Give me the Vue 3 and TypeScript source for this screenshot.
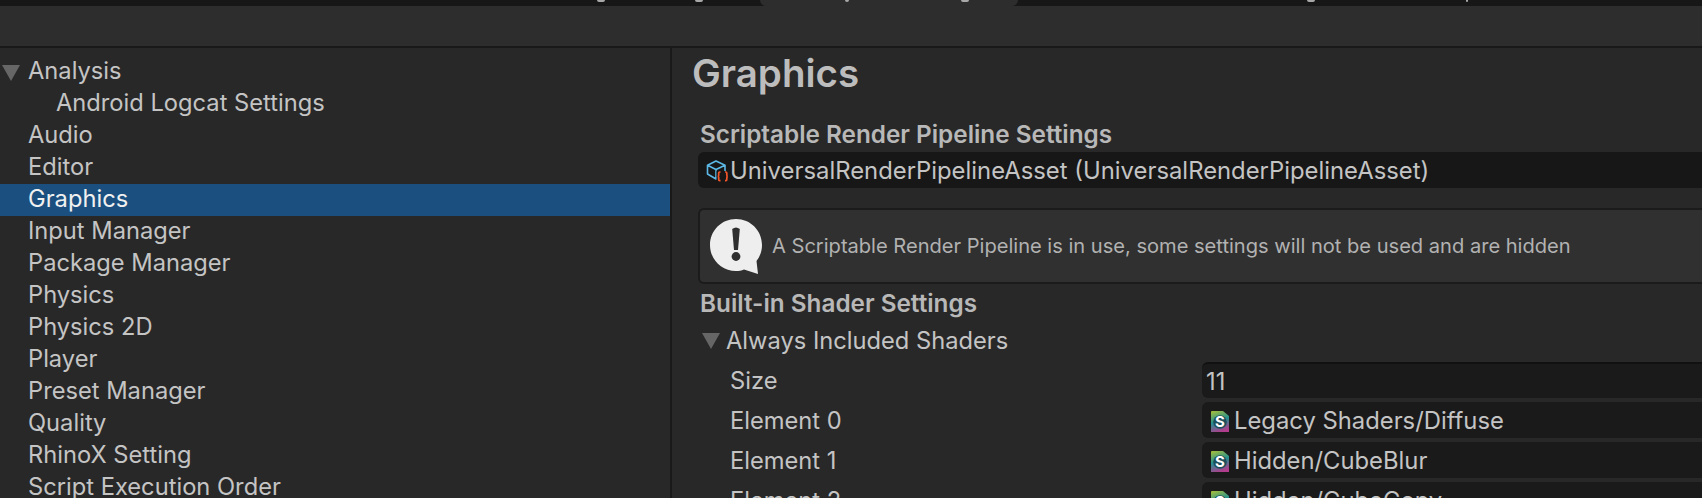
<script setup lang="ts">
const categories = [
  { name: 'Analysis', expanded: true },
  { name: 'Android Logcat Settings', child: true },
  { name: 'Audio' },
  { name: 'Editor' },
  { name: 'Graphics', selected: true },
  { name: 'Input Manager' },
  { name: 'Package Manager' },
  { name: 'Physics' },
  { name: 'Physics 2D' },
  { name: 'Player' },
  { name: 'Preset Manager' },
  { name: 'Quality' },
  { name: 'RhinoX Setting' },
  { name: 'Script Execution Order' },
]

const shaders = [
  { label: 'Element 0', value: 'Legacy Shaders/Diffuse' },
  { label: 'Element 1', value: 'Hidden/CubeBlur' },
  { label: 'Element 2', value: 'Hidden/CubeCopy' },
]

// bottoms of the tab titles that stick out under the window's top edge
const tabMarks = [
  { x: 597, w: 8 },
  { x: 695, w: 8 },
  { x: 845, w: 4 },
  { x: 961, w: 8 },
  { x: 1307, w: 8 },
  { x: 1466, w: 2 },
]
</script>

<template>
  <div class="window">
    <div class="tabstrip">
      <div class="tab-active"></div>
      <span
        v-for="mark in tabMarks"
        :key="mark.x"
        class="tab-mark"
        :style="{ left: mark.x + 'px', width: mark.w + 'px' }"
      ></span>
    </div>
    <div class="toolbar"></div>
    <div class="content">
      <aside class="sidebar">
        <div
          v-for="item in categories"
          :key="item.name"
          class="tree-row"
          :class="{ selected: item.selected, child: item.child }"
        >
          <span v-if="item.expanded" class="arrow tree-arrow"></span>
          {{ item.name }}
        </div>
      </aside>
      <main class="inspector">
        <h1 class="title">Graphics</h1>
        <h2 class="section first">Scriptable Render Pipeline Settings</h2>
        <div class="field object-field asset-field">
          <svg class="asset-icon" width="24" height="24" viewBox="0 0 24 24" fill="none">
            <path d="M10 2 L19 6.2 V15 L10 20 L1.5 15 V6.2 Z M1.5 6.2 L10 10.5 L19 6.2 M10 10.5 V20" stroke="#5cb8e6" stroke-width="1.6" stroke-linejoin="round" />
            <rect x="10.5" y="12" width="13.5" height="12" fill="#171717" />
            <path d="M14.5 13 h-.8 q-1 0 -1 1 v2.2 q0 1 -1 1.1 q1 .1 1 1.1 v2.2 q0 1 1 1 h.8" stroke="#f4552a" stroke-width="1.7" />
            <path d="M19 13 h.8 q1 0 1 1 v2.2 q0 1 1 1.1 q-1 .1 -1 1.1 v2.2 q0 1 -1 1 h-.8" stroke="#f4552a" stroke-width="1.7" />
          </svg>
          <span>UniversalRenderPipelineAsset (UniversalRenderPipelineAsset)</span>
        </div>
        <div class="helpbox">
          <svg class="help-icon" width="54" height="58" viewBox="0 0 54 58">
            <path d="M26 1 C40.5 1 52 12.5 52 27 C52 33 50 38.5 46.5 43 L48 56 L34 51.5 C31.5 52.5 29 53 26 53 C11.5 53 0 41.5 0 27 C0 12.5 11.5 1 26 1 Z" fill="#eeeeee" />
            <path d="M22.2 11 Q26 8 29.8 11 L28 32 H24 Z" fill="#2f2f2f" />
            <circle cx="26" cy="38.5" r="4.4" fill="#2f2f2f" />
          </svg>
          <span>A Scriptable Render Pipeline is in use, some settings will not be used and are hidden</span>
        </div>
        <h2 class="section">Built-in Shader Settings</h2>
        <div class="foldout"><span class="arrow"></span>Always Included Shaders</div>
        <div class="prop-row">
          <label>Size</label>
          <div class="field size-field">11</div>
        </div>
        <div v-for="shader in shaders" :key="shader.label" class="prop-row">
          <label>{{ shader.label }}</label>
          <div class="field object-field">
            <svg class="shader-icon" width="18" height="21" viewBox="0 0 18 21">
              <defs>
                <linearGradient id="shaderFill" x1="0.2" y1="0" x2="0.5" y2="1">
                  <stop offset="0" stop-color="#9dbb3f" />
                  <stop offset="0.5" stop-color="#23908f" />
                  <stop offset="1" stop-color="#b13d8c" />
                </linearGradient>
              </defs>
              <path d="M0 1 Q0 0 1 0 H12 L18 5 V21 H0 Z" fill="url(#shaderFill)" />
              <circle cx="9" cy="11" r="6.8" fill="#1d4f5c" />
              <text x="9" y="16" text-anchor="middle" class="shader-s">S</text>
            </svg>
            <span>{{ shader.value }}</span>
          </div>
        </div>
      </main>
    </div>
  </div>
</template>

<style scoped>
.window {
  width: 1702px;
  height: 498px;
  overflow: hidden;
  display: flex;
  flex-direction: column;
  background: #282828;
  color: #c4c4c4;
  font-family: Inter, "Noto Sans", sans-serif;
  font-size: 23.7px;
}

.tabstrip {
  position: relative;
  height: 6px;
  flex-shrink: 0;
  background: #171717;
  display: flex;
  padding-left: 760px;
  overflow: hidden;
}

.tab-active {
  width: 258px;
  height: 6px;
  background: #2d2d2d;
  border-radius: 0 0 6px 6px;
}

.tab-mark {
  position: absolute;
  top: 0;
  height: 2px;
  background: #a8a8a8;
  border-radius: 0 0 4px 4px;
}

.toolbar {
  height: 40px;
  flex-shrink: 0;
  background: #2d2d2d;
  border-bottom: 2px solid #191919;
}

.content {
  flex: 1;
  display: flex;
  min-height: 0;
}

.sidebar {
  width: 670px;
  flex-shrink: 0;
  padding-top: 8px;
  border-right: 2px solid #191919;
}

.tree-row {
  position: relative;
  height: 32px;
  line-height: 30px;
  padding-left: 28px;
  white-space: nowrap;
}

.tree-row.child {
  padding-left: 56px;
}

.tree-row.selected {
  background: #1a4f7f;
  color: #f0f0f0;
}

.arrow {
  display: inline-block;
  width: 0;
  height: 0;
  border-left: 9px solid transparent;
  border-right: 9px solid transparent;
  border-top: 16px solid #666666;
}

.tree-arrow {
  position: absolute;
  left: 2px;
  top: 9px;
}

.inspector {
  flex: 1;
  min-width: 0;
  padding: 0 0 0 26px;
}

.title {
  margin: 0 0 0 -6px;
  font-size: 38.5px;
  font-weight: 600;
  line-height: 50px;
  color: #bdbdbd;
}

.section {
  margin: 3px 0 0;
  font-size: 24.3px;
  font-weight: 600;
  line-height: 32px;
  height: 34px;
  color: #b8b8b8;
  padding-left: 2px;
}

.section.first {
  margin-top: 20px;
}

.field {
  height: 36px;
  line-height: 36px;
  border-radius: 6px;
  background: #1a1a1a;
  white-space: nowrap;
  overflow: hidden;
  margin-right: -8px;
  min-width: 0;
}

.object-field {
  display: flex;
  align-items: center;
  gap: 5px;
  padding-left: 9px;
  padding-top: 2px;
  box-sizing: border-box;
  font-size: 23.8px;
}

.asset-field {
  background: #171717;
  gap: 0;
  padding-left: 8px;
  font-size: 23.85px;
}

.asset-icon,
.shader-icon {
  flex-shrink: 0;
}

.helpbox {
  margin-top: 20px;
  height: 76px;
  box-sizing: border-box;
  display: flex;
  align-items: center;
  gap: 8px;
  padding-left: 10px;
  background: #303030;
  border: 2px solid #1b1b1b;
  border-right: none;
  border-radius: 6px 0 0 6px;
  font-size: 20.08px;
  color: #b2b2b2;
}

.help-icon {
  flex-shrink: 0;
  margin-top: 2px;
}

.foldout {
  height: 39px;
  line-height: 39px;
  padding-left: 4px;
  display: flex;
  align-items: center;
  gap: 6px;
}

.prop-row {
  height: 40px;
  display: grid;
  grid-template-columns: 472px minmax(0, 1fr);
  align-items: center;
  padding-left: 32px;
}

.size-field {
  padding-left: 4px;
  border-top: 2px solid #111111;
  box-sizing: border-box;
}

.shader-s {
  font-size: 15px;
  font-weight: 700;
  fill: #ffffff;
}
</style>
